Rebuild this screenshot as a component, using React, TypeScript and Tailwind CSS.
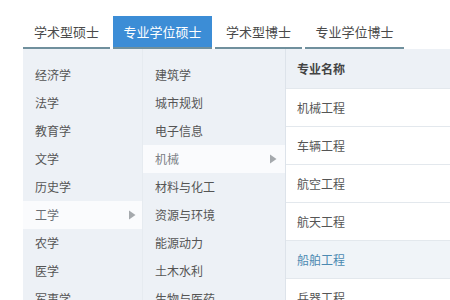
import React from "react";

const tabs = ["学术型硕士", "专业学位硕士", "学术型博士", "专业学位博士"];
const subjects = ["经济学", "法学", "教育学", "文学", "历史学", "工学", "农学", "医学", "军事学"];
const fields = ["建筑学", "城市规划", "电子信息", "机械", "材料与化工", "资源与环境", "能源动力", "土木水利", "生物与医药"];
const majors = ["机械工程", "车辆工程", "航空工程", "航天工程", "船舶工程", "兵器工程"];

function Arrow() {
  return (
    <svg width="8" height="10" viewBox="0 0 8 10" className="shrink-0">
      <path d="M1 0.5 L7.5 5 L1 9.5 Z" fill="#a5a9ad" />
    </svg>
  );
}

export default function App() {
  return (
    <div
      className="w-[450px] h-[300px] overflow-hidden bg-white pt-4"
      style={{ fontFamily: '"Noto Sans CJK SC", "Noto Sans", sans-serif' }}
    >
      {/* 标签 */}
      <div className="flex ml-[23px] gap-[3px]">
        {tabs.map((t, i) => (
          <div
            key={t}
            className={`h-[33px] flex items-center justify-center text-[13px] border-b-2 border-[#70909d] ${
              i === 1 ? "bg-[#3c8dd6] text-white w-[99px]" : "text-[#4a4a4a]"
            } ${i === 0 || i === 2 ? "w-[87px]" : ""} ${i === 3 ? "w-[99px]" : ""}`}
          >
            {t}
          </div>
        ))}
      </div>

      <div className="flex ml-[23px] h-[251px]">
        {/* 学科门类 */}
        <div className="w-[120px] bg-[#edf1f6] pt-[12px] border-r border-[#e6ebf0]">
          {subjects.map((s) => (
            <div
              key={s}
              className={`h-[28px] flex items-center justify-between pl-[12px] pr-[6px] text-[12px] ${
                s === "工学" ? "bg-[#fafbfd] text-[#6a6f75]" : "text-[#555]"
              }`}
            >
              <span>{s}</span>
              {s === "工学" && <Arrow />}
            </div>
          ))}
        </div>

        {/* 领域 */}
        <div className="w-[143px] bg-[#edf1f6] pt-[12px] border-r border-[#dde3ea]">
          {fields.map((f) => (
            <div
              key={f}
              className={`h-[28px] flex items-center justify-between pl-[12px] pr-[8px] text-[12px] ${
                f === "机械" ? "bg-[#fafbfd] text-[#7a7f85]" : "text-[#555]"
              }`}
            >
              <span>{f}</span>
              {f === "机械" && <Arrow />}
            </div>
          ))}
        </div>

        {/* 专业名称 */}
        <div className="flex-1">
          <div className="h-[40px] bg-[#edf1f6] flex items-center pl-[11px] text-[12px] font-bold text-[#444] border-b border-[#e3e8ed]">
            专业名称
          </div>
          {majors.map((m) => (
            <div
              key={m}
              className={`h-[38px] flex items-center pl-[11px] text-[12px] border-b border-[#e3e8ed] ${
                m === "船舶工程" ? "bg-[#f0f4f8] text-[#4c8ab2]" : "bg-white text-[#555]"
              }`}
            >
              {m}
            </div>
          ))}
        </div>
      </div>
    </div>
  );
}
